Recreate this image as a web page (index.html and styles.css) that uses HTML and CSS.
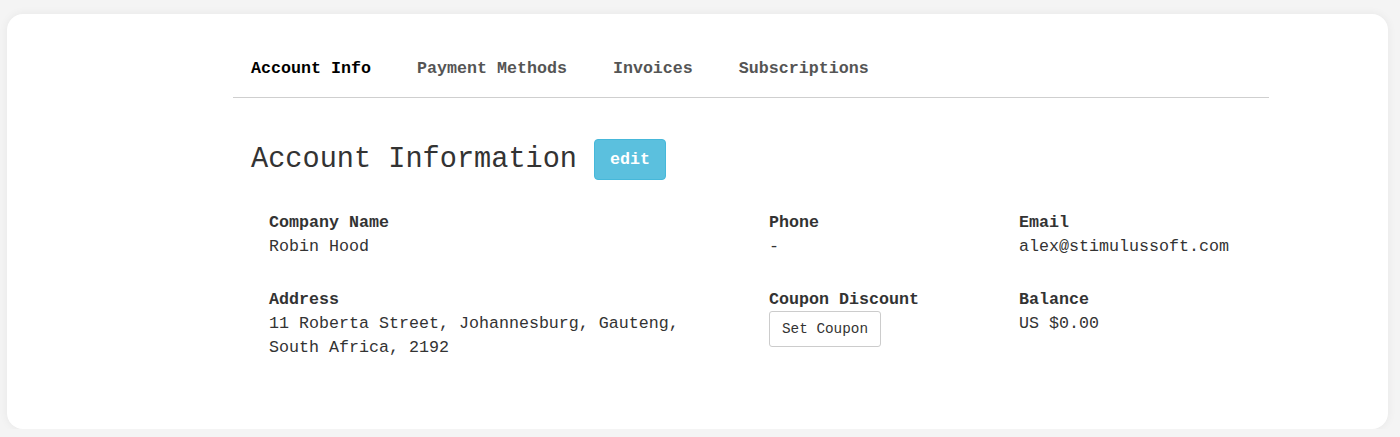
FILE: index.html
```html
<!DOCTYPE html>
<html>
<head>
<meta charset="utf-8">
<link rel="stylesheet" href="styles.css">
</head>
<body>
<div class="card">
  <div class="container">
    <nav class="tabs">
      <span class="tab active">Account Info</span>
      <span class="tab">Payment Methods</span>
      <span class="tab">Invoices</span>
      <span class="tab">Subscriptions</span>
    </nav>
    <div class="head-row">
      <h1 class="title">Account Information</h1>
      <button class="btn-edit">edit</button>
    </div>
    <div class="fields">
      <div class="field">
        <div class="label">Company Name</div>
        <div class="value">Robin Hood</div>
      </div>
      <div class="field">
        <div class="label">Phone</div>
        <div class="value">-</div>
      </div>
      <div class="field">
        <div class="label">Email</div>
        <div class="value">alex@stimulussoft.com</div>
      </div>
      <div class="field">
        <div class="label">Address</div>
        <div class="value">11 Roberta Street, Johannesburg, Gauteng,<br>South Africa, 2192</div>
      </div>
      <div class="field">
        <div class="label">Coupon Discount</div>
        <button class="btn-coupon">Set Coupon</button>
      </div>
      <div class="field">
        <div class="label">Balance</div>
        <div class="value">US $0.00</div>
      </div>
    </div>
  </div>
</div>
</body>
</html>
```
FILE: styles.css
```css
html, body {
  margin: 0;
  padding: 0;
}
body {
  background: #f4f4f4;
  font-family: "Liberation Mono", "Courier New", monospace;
  color: #333;
  font-size: 16.67px;
  line-height: 24px;
}
.card {
  margin: 14px 12px 0 7px;
  height: 415px;
  background: #fff;
  border-radius: 16px;
  box-shadow: 0 0 10px rgba(0, 0, 0, 0.06);
  box-sizing: border-box;
  padding-top: 43px;
}
.container {
  margin-left: 226px;
  width: 1036px;
}
.tabs {
  display: flex;
  gap: 46px;
  padding: 0 0 16px 18px;
  border-bottom: 1px solid #cfcfcf;
}
.tab {
  font-weight: bold;
  color: #555;
}
.tab.active {
  color: #000;
}
.head-row {
  display: flex;
  align-items: center;
  gap: 17px;
  padding-left: 18px;
  margin-top: 41px;
}
.title {
  margin: 0;
  font-size: 28.6px;
  font-weight: normal;
  line-height: 41px;
  color: #333;
}
.btn-edit {
  height: 41px;
  padding: 0 15px;
  background: #5bc0de;
  border: 1px solid #46b8da;
  border-radius: 4px;
  color: #fff;
  font-family: inherit;
  font-size: 16.67px;
  font-weight: bold;
}
.fields {
  display: grid;
  grid-template-columns: 500px 250px 250px;
  row-gap: 29px;
  margin-top: 31px;
  padding-left: 36px;
}
.label {
  font-weight: bold;
}
.value {
  white-space: nowrap;
}
.btn-coupon {
  margin-top: -1px;
  height: 36px;
  padding: 0 12px;
  background: #fff;
  border: 1px solid #ccc;
  border-radius: 3px;
  color: #333;
  font-family: inherit;
  font-size: 14.33px;
}
```
